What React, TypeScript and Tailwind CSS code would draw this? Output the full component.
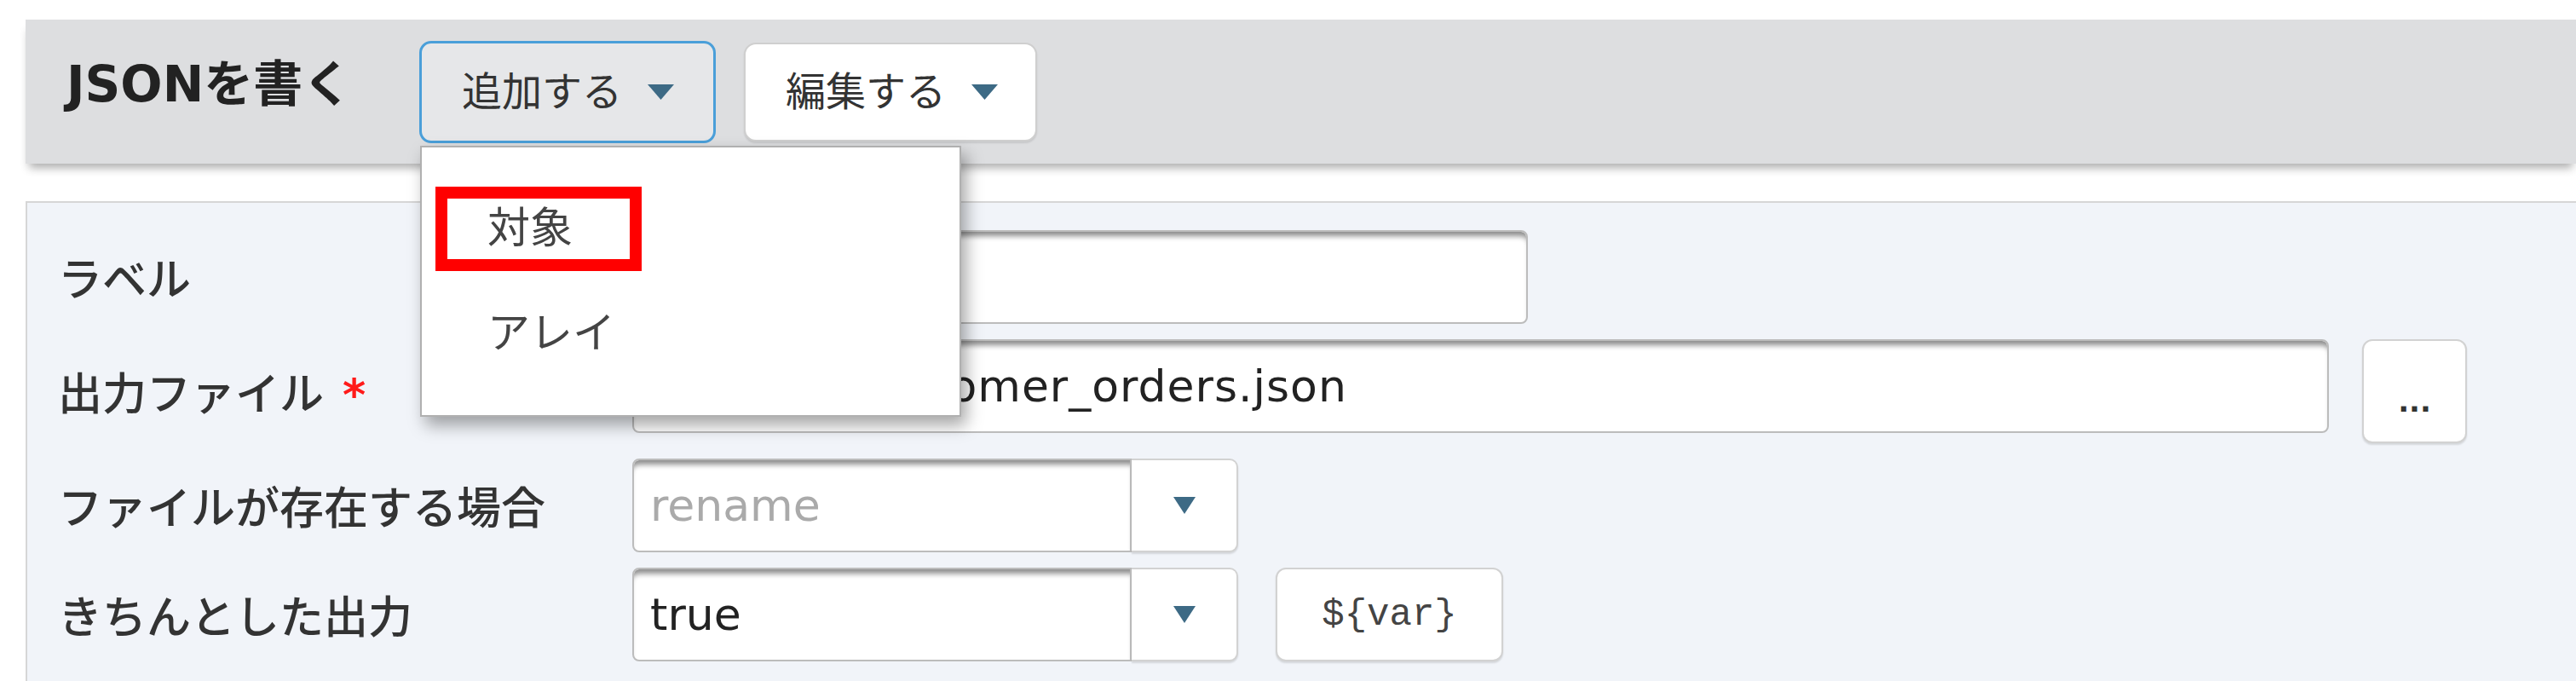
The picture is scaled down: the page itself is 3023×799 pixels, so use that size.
import React from "react";

const Caret = ({ w = 31, h = 18 }: { w?: number; h?: number }) => (
  <svg width={w} height={h} viewBox={`0 0 ${w} ${h}`} className="shrink-0">
    <polygon points={`0,0 ${w},0 ${w / 2},${h}`} fill="#3d6a85" />
  </svg>
);

const inputBase =
  "h-[110px] bg-white border-2 border-[#bcbcbc] shadow-[inset_0_9px_6px_-4px_rgba(0,0,0,0.45)] flex items-center pl-[19px] text-[52px] leading-none whitespace-nowrap overflow-hidden";

function Select({ value, placeholder }: { value: string; placeholder?: boolean }) {
  return (
    <div className="flex h-[110px] w-[711px]">
      <div className={`${inputBase} w-[586px] rounded-l-[8px] ${placeholder ? "text-[#aaaaaa]" : "text-[#222]"}`}>
        {value}
      </div>
      <div className="w-[125px] h-[110px] bg-white border-2 border-l-0 border-[#d2d2d2] rounded-r-[10px] flex items-center justify-center shadow-[0_2px_2px_rgba(0,0,0,0.12)]">
        <Caret w={26} h={20} />
      </div>
    </div>
  );
}

function Label({ children }: { children: React.ReactNode }) {
  return (
    <div className="w-[674px] shrink-0 pt-[8px] text-[52px] font-medium leading-none text-[#333] whitespace-nowrap self-center">
      {children}
    </div>
  );
}

export default function App() {
  return (
    <div className="w-[3023px] h-[799px] overflow-hidden bg-white font-['DejaVu_Sans','Noto_Sans_CJK_JP',sans-serif] text-[#333]">
      <div className="pt-[23px] pl-[30px] h-full flex flex-col">
        <header className="relative z-10 h-[169px] shrink-0 bg-[#dddee0] flex items-center shadow-[0_9px_10px_-4px_rgba(0,0,0,0.32)]">
          <h1 className="ml-[48px] w-[414px] mb-[18px] text-[58px] font-bold leading-none text-[#222] whitespace-nowrap">
            JSONを書く
          </h1>
          <div className="relative">
            <button className="h-[120px] w-[348px] flex items-center pl-[47px] border-[3px] border-[#4a9fd9] bg-[#e6e7e9] rounded-[14px] text-[47px] leading-none text-[#333]">
              <span className="whitespace-nowrap">追加する</span>
              <span className="ml-[30px]">
                <Caret />
              </span>
            </button>
            <div className="absolute left-[1px] top-[123px] w-[635px] h-[318px] bg-white border-2 border-[#b0b0b0] shadow-[6px_10px_18px_rgba(0,0,0,0.35)] py-[34px] text-[50px] leading-none text-[#444]">
              <div className="h-[123px] flex items-center pl-[16px]">
                <span className="w-[242px] h-[99px] border-[14px] border-[#ff0000] flex items-center pl-[47px] whitespace-nowrap">
                  対象
                </span>
              </div>
              <div className="h-[123px] flex items-center pl-[77px] whitespace-nowrap">アレイ</div>
            </div>
          </div>
          <button className="ml-[33px] h-[116px] w-[344px] flex items-center pl-[47px] border-2 border-[#cfcfcf] bg-white rounded-[14px] text-[47px] leading-none text-[#333] shadow-[0_2px_2px_rgba(0,0,0,0.1)]">
            <span className="whitespace-nowrap">編集する</span>
            <span className="ml-[30px]">
              <Caret />
            </span>
          </button>
        </header>

        <main className="flex-1 mt-[44px] bg-[#f1f4f9] border-t-2 border-l-2 border-[#d6d6d6] pt-[32px] pl-[36px]">
          <div className="flex flex-col gap-[18px]">
            <div className="flex h-[110px] items-center">
              <Label>ラベル</Label>
              <div className={`${inputBase} w-[1051px] rounded-[8px]`} />
            </div>
            <div className="flex h-[122px] items-start">
              <Label>
                出力ファイル<span className="ml-[22px] text-[#ff1a1a] font-bold">*</span>
              </Label>
              <div className={`${inputBase} w-[1991px] rounded-[8px] text-[#222] tracking-[1px]`}>C:\users\customer_orders.json</div>
              <button className="ml-[39px] w-[123px] h-[122px] bg-white border-2 border-[#d2d2d2] rounded-[12px] flex items-end justify-center pb-[30px] text-[34px] font-bold leading-none text-[#333] shadow-[0_2px_2px_rgba(0,0,0,0.12)]">
                ...
              </button>
            </div>
            <div className="flex h-[110px] items-center">
              <Label>ファイルが存在する場合</Label>
              <Select value="rename" placeholder />
            </div>
            <div className="flex h-[110px] items-center">
              <Label>きちんとした出力</Label>
              <Select value="true" />
              <button className="ml-[44px] w-[267px] h-[110px] bg-white border-2 border-[#d2d2d2] rounded-[12px] flex items-center justify-center font-['Liberation_Mono',monospace] text-[44px] leading-none text-[#444] shadow-[0_2px_2px_rgba(0,0,0,0.12)]">
                {"${var}"}
              </button>
            </div>
          </div>
        </main>
      </div>
    </div>
  );
}
